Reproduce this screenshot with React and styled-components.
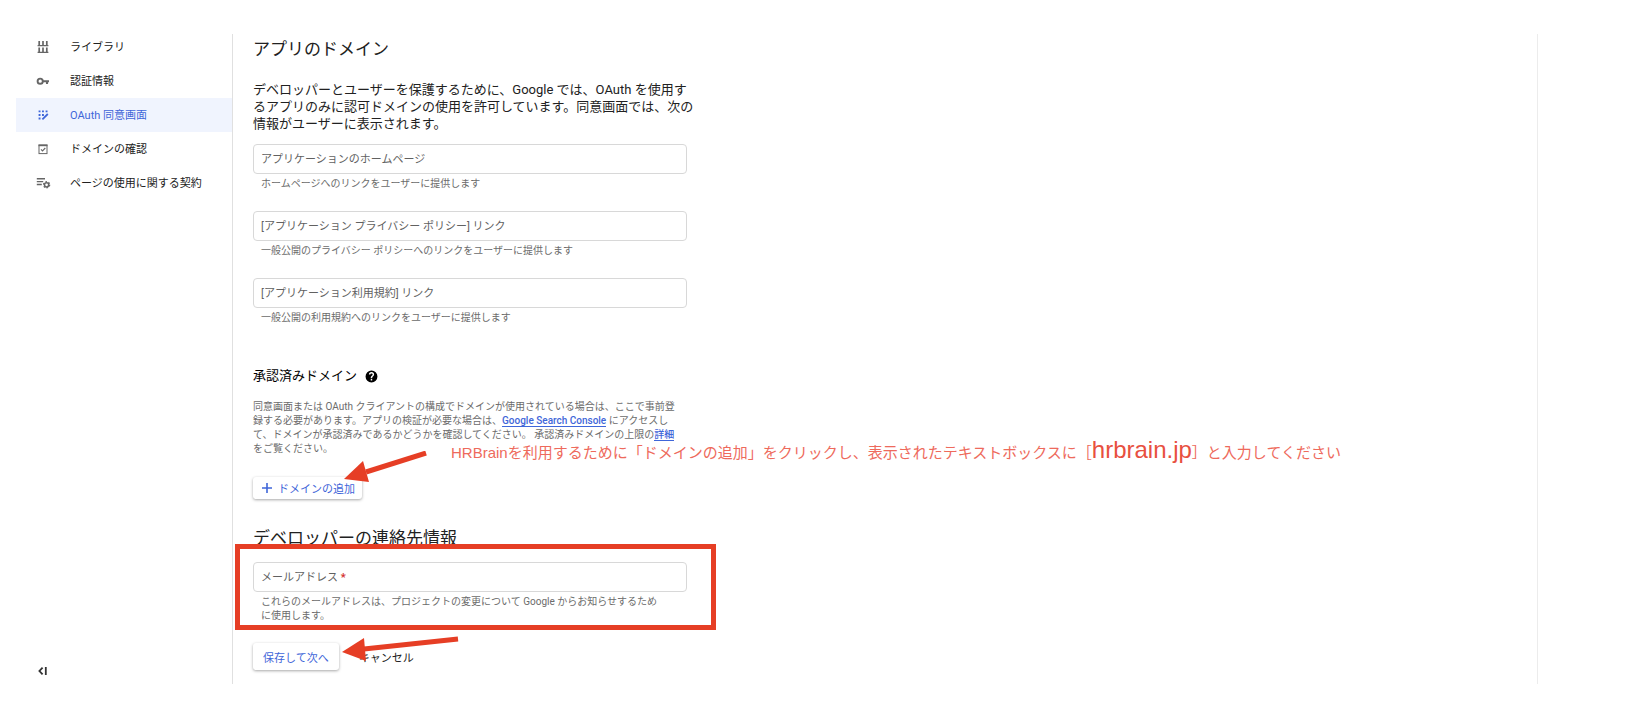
import React from "react";
//Styling
import styled, { createGlobalStyle } from "styled-components";

const GlobalStyle = createGlobalStyle`
  * {
    box-sizing: border-box;
  }

  body {
    margin: 0;
    background: white;
    color: #212121;
    font-family: Roboto, "Noto Sans CJK JP", sans-serif;
    font-size: 11px;
  }

  h2, h3, p {
    margin: 0;
    font-weight: 400;
  }

  button, input {
    font-family: inherit;
  }
`;

//Icons
const LibraryIcon = () => (
  <svg viewBox="0 0 16 16" fill="none" stroke="currentColor">
    <path d="M4.2 2v4.5M8 2v4.5M11.8 2v4.5M4.2 8.6v4.5M8 8.6v4.5M11.8 8.6v4.5" strokeWidth="1.7" />
    <path d="M2.6 6.6h10.8M2.6 13.4h10.8" strokeWidth="1.2" />
  </svg>
);

const KeyIcon = () => (
  <svg viewBox="0 0 16 16" fill="none" stroke="currentColor">
    <circle cx="5.2" cy="8.2" r="2.6" strokeWidth="1.9" />
    <path d="M7.8 8.2h6.2M12 8.2v2.8" strokeWidth="2.1" />
  </svg>
);

const ConsentIcon = () => (
  <svg viewBox="0 0 16 16" fill="currentColor">
    <path d="M3.6 3.4h1.9v1.9H3.6zM7 3.4h1.9v1.9H7zM10.6 3.4h1.9v1.9h-1.9zM3.6 7h1.9v1.9H3.6zM7 7h1.9v1.9H7zM3.6 10.6h1.9v1.9H3.6z" />
    <path d="M7.4 12.4l5.4-5.4" fill="none" stroke="currentColor" strokeWidth="1.8" />
  </svg>
);

const DomainIcon = () => (
  <svg viewBox="0 0 16 16" fill="none" stroke="currentColor">
    <rect x="4" y="4" width="8" height="8.6" strokeWidth="1" />
    <path d="M3.5 4.4h9" strokeWidth="1.6" />
    <path d="M6 8.4l1.5 1.5 2.8-2.9" strokeWidth="1.1" />
  </svg>
);

const AgreementIcon = () => (
  <svg viewBox="0 0 16 16" fill="none" stroke="currentColor">
    <path d="M1.8 3.7h8.2M1.8 6.6h6.4M1.8 9.5h5" strokeWidth="1.4" />
    <circle cx="11.6" cy="9.8" r="2.1" strokeWidth="1.5" />
    <circle cx="11.6" cy="9.8" r="3.1" strokeWidth="1.2" strokeDasharray="1.6 1.64" />
  </svg>
);

const HelpIcon = () => (
  <svg viewBox="0 0 24 24" fill="currentColor">
    <path d="M12 1a11 11 0 1 0 0 22 11 11 0 0 0 0-22zm1.3 18.2h-2.7v-2.6h2.7v2.6zm2.5-8.4l-1.1 1.1c-.9.9-1.4 1.6-1.4 3.3h-2.7v-.7c0-1.3.6-2.5 1.5-3.3l1.4-1.4c.4-.4.6-.9.6-1.4a2.1 2.1 0 0 0-4.2 0H7.2a4.8 4.8 0 0 1 9.6 0c0 .9-.4 1.8-1 2.4z" />
  </svg>
);

const PlusIcon = () => (
  <svg viewBox="0 0 12 12" fill="none" stroke="currentColor" strokeWidth="1.6">
    <path d="M6 1v10M1 6h10" />
  </svg>
);

const CollapseIcon = () => (
  <svg viewBox="0 0 16 16" fill="none" stroke="currentColor" strokeWidth="1.8">
    <path d="M7.6 4.6L4.4 8l3.2 3.4M10.8 4v8" />
  </svg>
);

const navItems = [
  { name: "ライブラリ", icon: LibraryIcon },
  { name: "認証情報", icon: KeyIcon },
  { name: "OAuth 同意画面", icon: ConsentIcon, active: true },
  { name: "ドメインの確認", icon: DomainIcon },
  { name: "ページの使用に関する契約", icon: AgreementIcon },
];

const domainFields = [
  {
    id: "homepage",
    label: "アプリケーションのホームページ",
    hint: "ホームページへのリンクをユーザーに提供します",
  },
  {
    id: "privacy",
    label: "[アプリケーション プライバシー ポリシー] リンク",
    hint: "一般公開のプライバシー ポリシーへのリンクをユーザーに提供します",
  },
  {
    id: "terms",
    label: "[アプリケーション利用規約] リンク",
    hint: "一般公開の利用規約へのリンクをユーザーに提供します",
  },
];

const TextField = ({ id, label, hint, required }) => (
  <StyledField>
    <StyledControl>
      <input id={id} type="text" placeholder=" " aria-describedby={`${id}-hint`} required={required} />
      <label htmlFor={id}>
        {label}
        {required && <b> *</b>}
      </label>
    </StyledControl>
    <StyledHint id={`${id}-hint`}>{hint}</StyledHint>
  </StyledField>
);

const App = () => {
  return (
    <>
      <GlobalStyle />
      <StyledPage>
        <StyledSidebar>
          <nav>
            {navItems.map(({ name, icon: Icon, active }) => (
              <StyledNavLink key={name} href="#" $active={active}>
                <Icon />
                <span>{name}</span>
              </StyledNavLink>
            ))}
          </nav>
          <StyledCollapse type="button" aria-label="メニューを閉じる">
            <CollapseIcon />
          </StyledCollapse>
        </StyledSidebar>

        <StyledMain>
          <StyledTitle>アプリのドメイン</StyledTitle>
          <StyledIntro>
            デベロッパーとユーザーを保護するために、Google では、OAuth を使用す<br />
            るアプリのみに認可ドメインの使用を許可しています。同意画面では、次の<br />
            情報がユーザーに表示されます。
          </StyledIntro>
          <StyledFields>
            {domainFields.map(field => (
              <TextField key={field.id} {...field} />
            ))}
          </StyledFields>

          <StyledSubtitle>
            承認済みドメイン
            <HelpIcon />
          </StyledSubtitle>
          <StyledNotes>
            同意画面または OAuth クライアントの構成でドメインが使用されている場合は、ここで事前登<br />
            録する必要があります。アプリの検証が必要な場合は、<a href="#">Google Search Console</a> にアクセスし<br />
            て、ドメインが承認済みであるかどうかを確認してください。 承認済みドメインの上限の<a href="#">詳細</a><br />
            をご覧ください。
            <StyledCallout>
              HRBrainを利用するために「ドメインの追加」をクリックし、表示されたテキストボックスに［<strong>hrbrain.jp</strong>］と入力してください
            </StyledCallout>
          </StyledNotes>
          <StyledAddRow>
            <StyledButton type="button" $small>
              <PlusIcon />
              ドメインの追加
            </StyledButton>
            <StyledArrow $left={91} $top={-26} width="84" height="32" viewBox="0 0 84 32">
              <path d="M82 2L22 21" />
              <polygon points="0,28 19,10 25,31" />
            </StyledArrow>
          </StyledAddRow>

          <StyledTitle>デベロッパーの連絡先情報</StyledTitle>
          <StyledContact>
            <TextField
              id="email"
              label="メールアドレス"
              hint={<>これらのメールアドレスは、プロジェクトの変更について Google からお知らせするため<br />に使用します。</>}
              required
            />
            <StyledHighlight />
          </StyledContact>
          <StyledActions>
            <StyledButton type="submit">保存して次へ</StyledButton>
            <StyledCancel type="button">キャンセル</StyledCancel>
            <StyledArrow $left={89} $top={-7} width="118" height="26" viewBox="0 0 118 26">
              <path d="M116 3L22 13" />
              <polygon points="0,16 22,2 24,25" />
            </StyledArrow>
          </StyledActions>
        </StyledMain>
      </StyledPage>
    </>
  );
};

const StyledPage = styled.div`
  display: flex;
  min-height: 100vh;
  padding: 30px 108px 34px 16px;
`;

const StyledSidebar = styled.aside`
  display: flex;
  flex-direction: column;
  justify-content: space-between;
  align-items: stretch;
  width: 216px;
  flex-shrink: 0;
`;

const StyledNavLink = styled.a`
  display: flex;
  align-items: center;
  gap: 19px;
  height: 34px;
  padding-left: 19px;
  text-decoration: none;
  color: ${props => (props.$active ? "#3f66d9" : "#212121")};
  background: ${props => (props.$active ? "#f0f4fe" : "transparent")};

  svg {
    width: 16px;
    height: 16px;
    color: ${props => (props.$active ? "#3f66d9" : "#666")};
  }

  span {
    padding-bottom: 2px;
  }
`;

const StyledCollapse = styled.button`
  width: 16px;
  height: 16px;
  margin: 0 0 5px 19px;
  padding: 0;
  border: none;
  background: none;
  color: #333;

  svg {
    display: block;
  }
`;

const StyledMain = styled.main`
  flex: 1;
  margin-top: 4px;
  padding-left: 20px;
  border-left: 1px solid #e0e0e0;
  border-right: 1px solid #ececec;
`;

const StyledTitle = styled.h2`
  font-size: 17px;
  line-height: 30px;
`;

const StyledIntro = styled.p`
  margin-top: 17px;
  font-size: 13px;
  line-height: 17px;
  white-space: nowrap;
`;

const StyledFields = styled.div`
  display: flex;
  flex-direction: column;
  gap: 20px;
  margin-top: 12px;
`;

const StyledField = styled.div`
  max-width: 434px;
`;

const StyledControl = styled.div`
  position: relative;

  input {
    display: block;
    width: 100%;
    height: 30px;
    padding: 0 8px;
    border: 1px solid #d8d8d8;
    border-radius: 4px;
    background: white;
    font-size: 11px;
  }

  label {
    position: absolute;
    left: 8px;
    top: 0;
    line-height: 32px;
    color: #616161;
    pointer-events: none;
  }

  input:not(:placeholder-shown) + label {
    display: none;
  }

  b {
    color: #d32f2f;
  }
`;

const StyledHint = styled.p`
  padding: 3px 0 0 8px;
  font-size: 10px;
  line-height: 14px;
  color: #6b6b6b;
`;

const StyledSubtitle = styled.h3`
  display: flex;
  align-items: center;
  gap: 8px;
  margin-top: 41px;
  font-size: 13px;
  line-height: 20px;
  color: black;

  svg {
    width: 13px;
    height: 13px;
  }
`;

const StyledNotes = styled.div`
  position: relative;
  margin-top: 14px;
  font-size: 10px;
  line-height: 14px;
  white-space: nowrap;
  color: #6b6b6b;

  a {
    color: #3f66d9;
    font-weight: 500;
    text-decoration: none;
    border-bottom: 1px solid #3f66d9;
  }
`;

const StyledCallout = styled.p`
  position: absolute;
  left: 198px;
  top: 36px;
  font-family: "Liberation Sans", "Noto Sans CJK JP", sans-serif;
  font-size: 15px;
  line-height: 28px;
  color: #ee6a5c;

  strong {
    font-size: 24px;
    font-weight: 400;
    color: #e8503f;
  }
`;

const StyledAddRow = styled.div`
  position: relative;
  display: flex;
  margin: 21px 0 24px;
`;

const StyledButton = styled.button`
  display: flex;
  align-items: center;
  gap: 5px;
  height: ${props => (props.$small ? "22px" : "27px")};
  padding: ${props => (props.$small ? "0 7px 0 8px" : "0 10px")};
  border: none;
  border-radius: 3px;
  background: white;
  box-shadow: 0 1px 3px rgba(0, 0, 0, 0.35);
  color: #3f66d9;
  font-size: 11px;
  white-space: nowrap;

  svg {
    width: 12px;
    height: 12px;
  }
`;

const StyledArrow = styled.svg`
  position: absolute;
  left: ${props => props.$left}px;
  top: ${props => props.$top}px;
  pointer-events: none;

  path {
    stroke: #e63e25;
    stroke-width: 5;
  }

  polygon {
    fill: #e63e25;
  }
`;

const StyledContact = styled.div`
  position: relative;
  margin-top: 9px;
`;

/* Drawn round the whole contact block */
const StyledHighlight = styled.div`
  position: absolute;
  left: -18px;
  top: -18px;
  width: 481px;
  height: 86px;
  border: 5px solid #e63e25;
  pointer-events: none;
`;

const StyledActions = styled.div`
  position: relative;
  display: flex;
  align-items: center;
  margin-top: 20px;
`;

const StyledCancel = styled.button`
  margin-left: 20px;
  padding: 0;
  border: none;
  background: none;
  color: #212121;
  font-size: 11px;
`;

export default App;
